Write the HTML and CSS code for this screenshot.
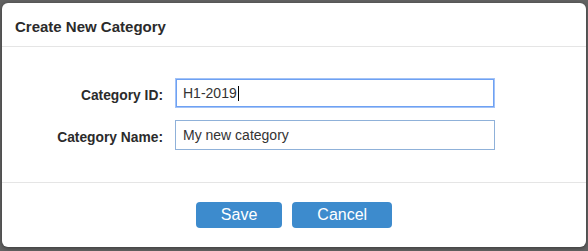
FILE: index.html
```html
<!DOCTYPE html>
<html lang="en">
<head>
<meta charset="utf-8">
<title>Create New Category</title>
<link rel="stylesheet" href="styles.css">
</head>
<body>
<div class="backdrop">
  <div class="dialog">
    <div class="dialog-header">
      <h1 class="dialog-title">Create New Category</h1>
    </div>
    <div class="dialog-body">
      <div class="form-row">
        <label class="form-label">Category ID:</label>
        <div class="field field-focus"><span class="field-text">H1-2019</span><span class="caret"></span></div>
      </div>
      <div class="form-row">
        <label class="form-label">Category Name:</label>
        <div class="field"><span class="field-text">My new category</span></div>
      </div>
    </div>
    <div class="dialog-footer">
      <button class="btn">Save</button>
      <button class="btn">Cancel</button>
    </div>
  </div>
</div>
</body>
</html>
```
FILE: styles.css
```css
html, body {
  margin: 0;
  padding: 0;
}
body {
  width: 588px;
  height: 251px;
  background: #636363;
  font-family: "Liberation Sans", Arial, sans-serif;
  color: #333333;
  overflow: hidden;
}
.backdrop {
  padding: 3px 2px 0 2px;
}
.dialog {
  width: 584px;
  height: 244px;
  background: #ffffff;
  border-radius: 6px;
  box-shadow: 0 1px 4px rgba(0, 0, 0, 0.45);
  display: flex;
  flex-direction: column;
  box-sizing: border-box;
}
.dialog-header {
  padding: 15px 13px 11px 13px;
  border-bottom: 1px solid #e5e5e5;
}
.dialog-title {
  margin: 0;
  font-size: 15px;
  line-height: 17px;
  font-weight: bold;
  color: #2b2b2b;
}
.dialog-body {
  padding: 31px 0 32px 0;
  display: flex;
  flex-direction: column;
  gap: 12px;
  border-bottom: 1px solid #e5e5e5;
}
.form-row {
  display: flex;
  align-items: flex-start;
  gap: 12px;
}
.form-label {
  width: 161px;
  text-align: right;
  font-size: 13.8px;
  line-height: 17px;
  font-weight: bold;
  padding-top: 9px;
  color: #2b2b2b;
}
.field {
  width: 320px;
  height: 30px;
  box-sizing: border-box;
  border: 1px solid #8fb1d9;
  padding: 0 7px;
  font-size: 14px;
  line-height: 28px;
  color: #333333;
  display: flex;
  align-items: center;
}
.field-focus {
  border-color: #a3c3f7;
  box-shadow: inset 0 0 0 1px #6ea1f3;
}
.field-text {
  white-space: pre;
}
.caret {
  display: inline-block;
  width: 1px;
  height: 15px;
  background: #000000;
  margin-left: 1px;
}
.dialog-footer {
  padding: 19px 0;
  display: flex;
  justify-content: center;
  gap: 10px;
}
.btn {
  height: 26px;
  padding: 0 25px;
  border: none;
  border-radius: 4px;
  background: #3d8bcd;
  color: #ffffff;
  font-family: "Liberation Sans", Arial, sans-serif;
  font-size: 16px;
  line-height: 26px;
  cursor: pointer;
}
```
